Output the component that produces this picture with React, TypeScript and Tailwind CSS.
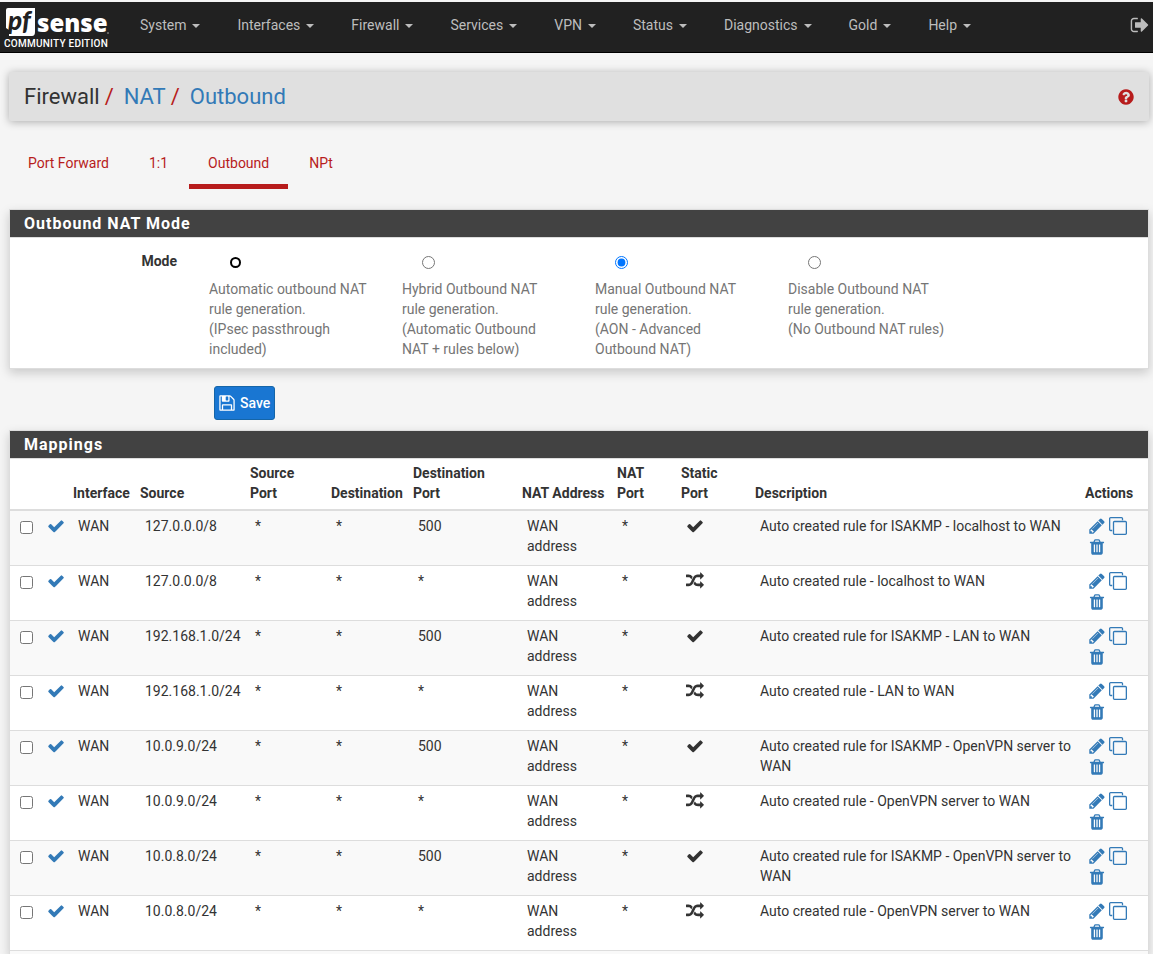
import type { ReactNode } from "react";

const paths = {
  check:
    "M1671 566q0 40-28 68l-724 724-136 136q-28 28-68 28t-68-28l-136-136-362-362q-28-28-28-68t28-68l136-136q28-28 68-28t68 28l294 295 656-657q28-28 68-28t68 28l136 136q28 28 28 68z",
  pencil:
    "M491 1536l91-91-235-235-91 91v107h128v128h107zm523-928q0-22-22-22-10 0-17 7l-542 542q-7 7-7 17 0 22 22 22 10 0 17-7l542-542q7-7 7-17zm-54-192l416 416-832 832h-416v-416zm683 96q0 53-37 90l-166 166-416-416 166-165q36-38 90-38 53 0 91 38l235 234q37 39 37 91z",
  trash:
    "M704 1376v-704q0-14-9-23t-23-9h-64q-14 0-23 9t-9 23v704q0 14 9 23t23 9h64q14 0 23-9t9-23zm256 0v-704q0-14-9-23t-23-9h-64q-14 0-23 9t-9 23v704q0 14 9 23t23 9h64q14 0 23-9t9-23zm256 0v-704q0-14-9-23t-23-9h-64q-14 0-23 9t-9 23v704q0 14 9 23t23 9h64q14 0 23-9t9-23zm-544-992h448l-48-117q-7-9-17-11h-317q-10 2-17 11zm928 32v64q0 14-9 23t-23 9h-96v948q0 83-47 143.5t-113 60.5h-832q-66 0-113-58.5t-47-141.5v-952h-96q-14 0-23-9t-9-23v-64q0-14 9-23t23-9h309l70-167q15-37 54-63t79-26h320q40 0 79 26t54 63l70 167h309q14 0 23 9t9 23z",
  random:
    "M666 481q-60 92-137 273-22-45-37-72.5t-40.5-63.5-51-56.5-63-35-81.5-14.5h-224q-14 0-23-9t-9-23v-192q0-14 9-23t23-9h224q250 0 410 225zm1126 799q0 14-9 23l-320 320q-9 9-23 9-13 0-22.5-9.5t-9.5-22.5v-192q-32 0-85 .5t-81 1-73-1-71-5-64-10.5-63-18.5-58-28.5-59-40-55-53.5-56-69.5q59-93 136-273 22 45 37 72.5t40.5 63.5 51 56.5 63 35 81.5 14.5h256v-192q0-14 9-23t23-9q12 0 24 10l319 319q9 9 9 23zm0-896q0 14-9 23l-320 320q-9 9-23 9-13 0-22.5-9.5t-9.5-22.5v-192h-256q-48 0-87 15t-69 45-51 61.5-45 77.5q-32 62-78 171-29 66-49.5 111t-54 105-64 100-74 83-90 68.5-106.5 42-128 16.5h-224q-14 0-23-9t-9-23v-192q0-14 9-23t23-9h224q48 0 87-15t69-45 51-61.5 45-77.5q32-62 78-171 29-66 49.5-111t54-105 64-100 74-83 90-68.5 106.5-42 128-16.5h256v-192q0-14 9-23t23-9q12 0 24 10l319 319q9 9 9 23z",
  signOut:
    "M704 1440q0 4 1 20t.5 26.5-3 23.5-10 19.5-20.5 6.5h-320q-119 0-203.5-84.5t-84.5-203.5v-704q0-119 84.5-203.5t203.5-84.5h320q13 0 22.5 9.5t9.5 22.5q0 4 1 20t.5 26.5-3 23.5-10 19.5-20.5 6.5h-320q-66 0-113 47t-47 113v704q0 66 47 113t113 47h312l11.5 1 11.5 3 8 5.5 7 9 2 13.5zm928-544q0 26-19 45l-544 544q-19 19-45 19t-45-19-19-45v-288h-448q-26 0-45-19t-19-45v-384q0-26 19-45t45-19h448v-288q0-26 19-45t45-19 45 19l544 544q19 19 19 45z",
  question:
    "M1024 1376v-192q0-14-9-23t-23-9h-192q-14 0-23 9t-9 23v192q0 14 9 23t23 9h192q14 0 23-9t9-23zm256-672q0-88-55.5-163t-138.5-116-170-41q-243 0-371 213-15 24 8 42l132 100q7 6 19 6 16 0 25-12 53-68 86-92 34-24 86-24 48 0 85.5 26t37.5 59q0 38-20 61t-68 45q-63 28-115.5 86.5t-52.5 125.5v36q0 14 9 23t23 9h192q14 0 23-9t9-23q0-19 21.5-49.5t54.5-49.5q32-18 49-28.5t46-35 44.5-48 28-60.5 12.5-81zm384 192q0 209-103 385.5t-279.5 279.5-385.5 103-385.5-103-279.5-279.5-103-385.5 103-385.5 279.5-279.5 385.5-103 385.5 103 279.5 279.5 103 385.5z",
  save: "M512 1536h768v-384h-768v384zm896 0h128v-896q0-14-10-38.5t-20-34.5l-281-281q-10-10-34-20t-39-10v416q0 40-28 68t-68 28h-576q-40 0-68-28t-28-68v-416h-128v1280h128v-416q0-40 28-68t68-28h832q40 0 68 28t28 68v416zm-384-928v-320q0-13-9.5-22.5t-22.5-9.5h-192q-13 0-22.5 9.5t-9.5 22.5v320q0 13 9.5 22.5t22.5 9.5h192q13 0 22.5-9.5t9.5-22.5zm640 32v928q0 40-28 68t-68 28h-1344q-40 0-68-28t-28-68v-1344q0-40 28-68t68-28h928q40 0 88 20t76 48l280 280q28 28 48 76t20 88z",
  clone:
    "M1664 1632v-1088q0-13-9.5-22.5t-22.5-9.5h-1088q-13 0-22.5 9.5t-9.5 22.5v1088q0 13 9.5 22.5t22.5 9.5h1088q13 0 22.5-9.5t9.5-22.5zm128-1088v1088q0 66-47 113t-113 47h-1088q-66 0-113-47t-47-113v-1088q0-66 47-113t113-47h1088q66 0 113 47t47 113zm-384-384v160h-128v-160q0-13-9.5-22.5t-22.5-9.5h-1088q-13 0-22.5 9.5t-9.5 22.5v1088q0 13 9.5 22.5t22.5 9.5h160v128h-160q-66 0-113-47t-47-113v-1088q0-66 47-113t113-47h1088q66 0 113 47t47 113z",
};

function Icon({ name, className = "size-[18px]" }: { name: keyof typeof paths; className?: string }) {
  return (
    <svg viewBox="0 0 1792 1792" className={className} fill="currentColor" aria-hidden="true">
      <path d={paths[name]} />
    </svg>
  );
}

function Logo() {
  return (
    <a href="#" className="flex w-[121px] shrink-0 flex-col pl-1 pt-[4px]">
      <svg viewBox="0 0 112 31" className="h-[31px] w-[112px] overflow-visible" aria-hidden="true">
        <path d="M2 4q0-2 2-2h27v24q0 4-3 4H5V24L2 22z" fill="#fff" />
        <text
          x="4"
          y="24"
          fontSize="26"
          fontStyle="italic"
          fontWeight="900"
          fill="#212121"
          fontFamily="Lato, sans-serif"
        >
          pf
        </text>
        <text x="33" y="26" fontSize="24" fontWeight="800" fill="#fff" fontFamily="'Open Sans', sans-serif">
          sense
        </text>
        <circle cx="104" cy="27" r="1" fill="#777" />
      </svg>
      <span className="whitespace-nowrap text-[10px] font-medium leading-[14px] tracking-wide text-white">
        COMMUNITY EDITION
      </span>
    </a>
  );
}

function Caret() {
  return (
    <span className="ml-[6px] inline-block border-x-4 border-t-4 border-x-transparent border-t-current align-middle" />
  );
}

const menus = ["System", "Interfaces", "Firewall", "Services", "VPN", "Status", "Diagnostics", "Gold", "Help"];

const tabs = ["Port Forward", "1:1", "Outbound", "NPt"];

const modes = [
  { id: "automatic", lines: ["Automatic outbound NAT rule generation.", "(IPsec passthrough included)"] },
  { id: "hybrid", lines: ["Hybrid Outbound NAT rule generation.", "(Automatic Outbound NAT + rules below)"] },
  { id: "manual", lines: ["Manual Outbound NAT rule generation.", "(AON - Advanced Outbound NAT)"] },
  { id: "disabled", lines: ["Disable Outbound NAT rule generation.", "(No Outbound NAT rules)"] },
];

const rules = [
  { source: "127.0.0.0/8", port: "500", desc: "Auto created rule for ISAKMP - localhost to WAN" },
  { source: "127.0.0.0/8", port: "*", desc: "Auto created rule - localhost to WAN" },
  { source: "192.168.1.0/24", port: "500", desc: "Auto created rule for ISAKMP - LAN to WAN" },
  { source: "192.168.1.0/24", port: "*", desc: "Auto created rule - LAN to WAN" },
  { source: "10.0.9.0/24", port: "500", desc: "Auto created rule for ISAKMP - OpenVPN server to WAN" },
  { source: "10.0.9.0/24", port: "*", desc: "Auto created rule - OpenVPN server to WAN" },
  { source: "10.0.8.0/24", port: "500", desc: "Auto created rule for ISAKMP - OpenVPN server to WAN" },
  { source: "10.0.8.0/24", port: "*", desc: "Auto created rule - OpenVPN server to WAN" },
];

function Panel({ title, children }: { title: string; children: ReactNode }) {
  return (
    <section className="border border-[#ddd] bg-white shadow-[0_4px_10px_rgba(0,0,0,0.18)]">
      <h2 className="border-b border-[#ddd] bg-[#424242] pl-[14px] text-base font-bold leading-[27px] tracking-[1px] text-white">
        {title}
      </h2>
      {children}
    </section>
  );
}

function Th({ children }: { children?: ReactNode }) {
  return <th className="px-[5px] pb-[6px] pt-[4px] text-left align-bottom font-bold">{children}</th>;
}

function Td({ children }: { children?: ReactNode }) {
  return <td className="py-[5px] pl-[10px] align-top">{children}</td>;
}

export default function App() {
  return (
    <div className="min-h-screen overflow-hidden bg-[#f5f5f5] font-['Roboto',sans-serif] text-sm leading-5 text-[#333]">
      <header className="mt-[2px] flex h-[51px] border-b border-black bg-[#212121]">
        <Logo />
        <nav className="flex grow">
          {menus.map((m) => (
            <button key={m} type="button" className="pb-[4px] pl-[19px] pr-[18px] text-[#bdbdbd]">
              {m}
              <Caret />
            </button>
          ))}
        </nav>
        <a href="#" aria-label="Logout" className="flex items-center pb-[5px] pr-[3px] text-[#bdbdbd]">
          <Icon name="signOut" className="size-[20px]" />
        </a>
      </header>

      <main className="pl-[9px] pr-[4px] pt-[19px]">
        <div className="flex h-[49px] items-center justify-between rounded-[2px] bg-[#e0e0e0] pl-[15px] pr-[14px] shadow-[0_1px_8px_rgba(0,0,0,0.3)]">
          <h1 className="flex text-[22px] leading-6">
            <span>Firewall</span>
            <span className="pl-[5px] pr-[10px] text-[#b71c1c]">/</span>
            <a href="#" className="text-[#337ab7]">NAT</a>
            <span className="pl-[5px] pr-[10px] text-[#b71c1c]">/</span>
            <a href="#" className="text-[#337ab7]">Outbound</a>
          </h1>
          <a href="#" aria-label="Help" className="text-[#b71c1c]">
            <Icon name="question" />
          </a>
        </div>

        <nav className="flex gap-[2px] pt-[32px]">
          {tabs.map((t) => (
            <a
              key={t}
              href="#"
              className={
                t === "Outbound"
                  ? "border-b-[5px] border-[#b71c1c] px-[19px] pb-[11px] text-[#b71c1c]"
                  : "border-b-[5px] border-transparent px-[19px] pb-[11px] text-[#b71c1c]"
              }
            >
              {t}
            </a>
          ))}
        </nav>

        <form className="pt-[20px]" onSubmit={(e) => e.preventDefault()}>
          <Panel title="Outbound NAT Mode">
            <div
              role="radiogroup"
              aria-labelledby="mode-label"
              className="-ml-[9px] -mr-[11px] flex pb-[9px] pt-[13px]"
            >
              <span id="mode-label" className="w-1/6 pr-[17px] text-right font-bold">Mode</span>
              {modes.map((m) => (
                <label key={m.id} className="block w-1/6 pl-[15px] pr-[18px] text-[#757575]">
                  <span className="flex h-[28px] items-start pl-[20px] pt-[5px]">
                    <input
                      type="radio"
                      name="mode"
                      defaultChecked={m.id === "manual"}
                      className={
                        m.id === "automatic"
                          ? "m-px size-[11px] appearance-none rounded-full border-2 border-black bg-white"
                          : "size-[13px]"
                      }
                    />
                  </span>
                  {m.lines.map((l) => (
                    <span key={l} className="block">{l}</span>
                  ))}
                </label>
              ))}
            </div>
          </Panel>
          <button
            type="submit"
            className="ml-[205px] mt-[17px] flex h-[34px] items-center rounded-[3px] border border-[#1565a8] bg-[#1976d2] pb-px pl-[3px] pr-[4px] font-medium text-white"
          >
            <Icon name="save" />
            <span className="pl-[4px]">Save</span>
          </button>
        </form>

        <div className="pt-[10px]">
          <Panel title="Mappings">
            <table className="w-full table-fixed border-collapse">
              <colgroup>
                <col className="w-[27px]" />
                <col className="w-[31px]" />
                <col className="w-[67px]" />
                <col className="w-[110px]" />
                <col className="w-[81px]" />
                <col className="w-[82px]" />
                <col className="w-[109px]" />
                <col className="w-[95px]" />
                <col className="w-[64px]" />
                <col className="w-[74px]" />
                <col />
                <col className="w-[68px]" />
              </colgroup>
              <thead>
                <tr className="border-b-2 border-[#ddd]">
                  <Th />
                  <Th />
                  <Th>Interface</Th>
                  <Th>Source</Th>
                  <Th>Source<br />Port</Th>
                  <Th>Destination</Th>
                  <Th>Destination<br />Port</Th>
                  <Th><span className="whitespace-nowrap">NAT Address</span></Th>
                  <Th>NAT<br />Port</Th>
                  <Th>Static<br />Port</Th>
                  <Th>Description</Th>
                  <Th>Actions</Th>
                </tr>
              </thead>
              <tbody>
                {rules.map((r, i) => (
                  <tr key={i} className="h-[55px] border-b border-[#ddd] odd:bg-[#f9f9f9]">
                    <Td>
                      <input type="checkbox" aria-label={r.desc} className="mt-[5px] block size-[13px]" />
                    </Td>
                    <Td>
                      <button type="button" aria-label="Toggle rule" className="block pt-px text-[#337ab7]">
                        <Icon name="check" />
                      </button>
                    </Td>
                    <Td>WAN</Td>
                    <Td>{r.source}</Td>
                    <Td>*</Td>
                    <Td>*</Td>
                    <Td>{r.port}</Td>
                    <Td>WAN<br />address</Td>
                    <Td>*</Td>
                    <Td>
                      <span className="block pt-px">
                        <Icon name={r.port === "500" ? "check" : "random"} />
                      </span>
                    </Td>
                    <Td>{r.desc}</Td>
                    <td className="pl-2 pt-[6px] align-top text-[#337ab7]">
                      <div className="flex w-[40px] flex-wrap gap-[3px]">
                        <a href="#" aria-label="Edit"><Icon name="pencil" /></a>
                        <a href="#" aria-label="Copy"><Icon name="clone" /></a>
                        <a href="#" aria-label="Delete"><Icon name="trash" /></a>
                      </div>
                    </td>
                  </tr>
                ))}
                <tr className="h-1 bg-[#f9f9f9]">
                  <td colSpan={12} />
                </tr>
              </tbody>
            </table>
          </Panel>
        </div>
      </main>
    </div>
  );
}
